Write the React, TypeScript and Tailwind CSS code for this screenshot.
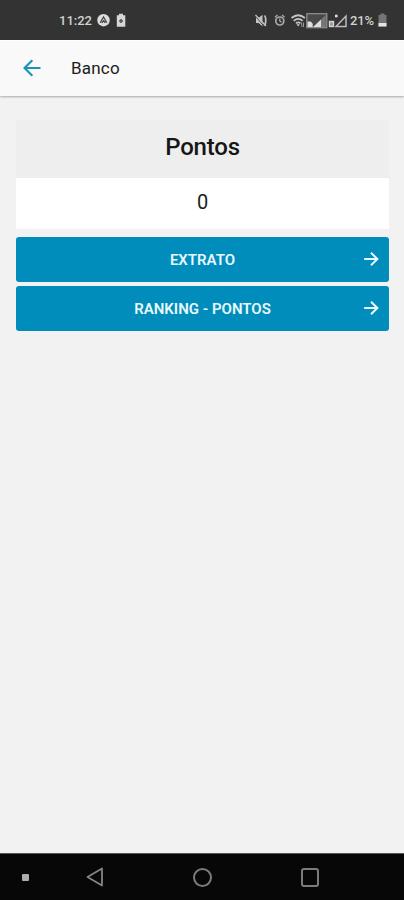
import React from "react";

function StatusBar() {
  return (
    <div className="flex h-10 shrink-0 items-start bg-[#333333] pl-[59px] pt-[13px] text-[#d2d2d2]">
      <span className="w-[38px] whitespace-nowrap text-[13px] font-medium leading-[15px]">11:22</span>
      <svg width="13" height="14" viewBox="0 0 13 14" className="shrink-0">
        <circle cx="6.5" cy="7.2" r="6.2" fill="#dcdcdc" />
        <path d="M3.2 9.8 6.5 4l3.3 5.8M4.8 9.8 6.5 7.8l1.8 2" fill="none" stroke="#444" strokeWidth="1.3" />
      </svg>
      <svg width="10" height="15" viewBox="0 0 10 15" className="ml-[6px] shrink-0">
        <path d="M3 .8h4v1.4h2.3v11.6H.8V2.2H3z" fill="#d6d6d6" />
        <path d="M5 6v4M3 8h4" stroke="#555" strokeWidth="1.6" />
      </svg>
      <svg width="95" height="16" viewBox="255 13 95 16" className="ml-[129px] shrink-0">
        <path d="M256 18h2.5l4-3.2v11.4l-4-3.2H256z" fill="#c4c4c4" />
        <path d="M264.7 15.5q2.2 4.5 0 10" fill="none" stroke="#c2c2c2" strokeWidth="1.7" />
        <path d="M255.5 16.3 264 26.2" stroke="#444" strokeWidth="1" />
        <path d="m255.5 15 10.5 11" stroke="#c2c2c2" strokeWidth="1.3" />
        <circle cx="279.8" cy="21" r="4" fill="none" stroke="#aaa" strokeWidth="1.7" />
        <path d="m275 17.2 2.5-2.2m7 2.2L282 15M279.8 18.5V21l1.8 1.2" fill="none" stroke="#aaa" strokeWidth="1.3" />
        <path d="M291.5 18q6.7-5.5 13.4 0M293.7 20.8q4.5-3.8 9 0M296 23.4q2.2-2 4.4 0" fill="none" stroke="#c4c4c4" strokeWidth="1.7" />
        <path d="m296.5 24.3 1.7 2.2 1.7-2.2z" fill="#ccc" />
        <path d="m301.5 22.5.5 4.5m1.5-4.5v4.5" stroke="#999" strokeWidth="1" />
        <rect x="306.8" y="13.7" width="20" height="14" fill="#494949" stroke="#8c8c8c" strokeWidth="1.3" />
        <path d="M313 27 321 19.5V27zM307.5 21.5h3.2l2 2.2V27h-5.2z" fill="#dedede" />
        <path d="m321 19.5 4.8-4.5v12H321z" fill="#777" />
        <rect x="329.5" y="21.5" width="4" height="5" fill="#999" stroke="#d4d4d4" strokeWidth="1.4" />
        <rect x="335" y="14.7" width="2.6" height="2.6" fill="#ddd" />
        <path d="M336 26.5 346 16v10.5z" fill="none" stroke="#bdbdbd" strokeWidth="1.5" />
      </svg>
      <span className="w-[29px] whitespace-nowrap text-[13px] font-medium leading-[15px] tracking-[-0.1px]">21%</span>
      <svg width="9" height="15" viewBox="0 0 9 15" className="-ml-px shrink-0">
        <path d="M2.5 .5h4V2h2v11.5H.5V2h2z" fill="#747474" />
        <path d="M.5 10h8v3.5h-8z" fill="#e3e3e3" />
      </svg>
    </div>
  );
}

function Arrow({ left = false }: { left?: boolean }) {
  return left ? (
    <svg width="18" height="18" viewBox="0 0 18 18" className="mb-px shrink-0">
      <path d="M17.5 9H2M9.3 1.2 1.5 9l7.8 7.8" fill="none" stroke="#1b94b8" strokeWidth="2.2" />
    </svg>
  ) : (
    <svg width="15" height="14" viewBox="0 0 15 14" className="absolute right-[10px] top-[15px]">
      <path d="M.2 7h13M7 .8 13.4 7 7 13.2" fill="none" stroke="#e9faff" strokeWidth="2" />
    </svg>
  );
}

function ActionButton({ label }: { label: string }) {
  return (
    <button className="relative flex h-[45px] w-full items-center justify-center rounded-[3px] bg-[#008dbb] text-[15px] font-semibold leading-5 text-[#e9f8fd]">
      {label}
      <Arrow />
    </button>
  );
}

export default function App() {
  return (
    <div className="flex h-[900px] w-[404px] flex-col overflow-hidden bg-[#f2f2f2] font-[Roboto,sans-serif]">
      <StatusBar />
      <header className="z-10 flex h-14 shrink-0 items-center border-t border-white bg-[#f9f9f9] pl-[23px] shadow-[0_1px_2px_rgba(0,0,0,0.3)]">
        <Arrow left />
        <h1 className="ml-[30px] text-[17px] font-normal tracking-[0.2px] text-[#202020]">Banco</h1>
      </header>
      <main className="flex-1 pl-4 pr-[15px] pt-6">
        <section className="text-center">
          <h2 className="h-[58px] bg-[#eeeeee] pt-[12px] text-[24px] font-medium leading-[30px] tracking-[-0.2px] text-[#161616]">Pontos</h2>
          <div className="h-[51px] bg-white pt-[12px] text-[20px] leading-6 text-[#1c1c1c]">0</div>
        </section>
        <div className="mt-[8.4px] flex flex-col gap-1">
          <ActionButton label="EXTRATO" />
          <ActionButton label="RANKING - PONTOS" />
        </div>
      </main>
      <nav className="flex h-[47px] shrink-0 items-center border-t border-[#555] bg-[#070707] pl-[22px]">
        <span className="h-[7px] w-[7px] rounded-[1px] bg-[#adadad]" />
        <svg width="18" height="20" viewBox="0 0 18 20" className="ml-[57px]">
          <path d="M16 1.5v17L1.5 10z" fill="none" stroke="#858585" strokeWidth="1.8" strokeLinejoin="round" />
        </svg>
        <span className="ml-[89px] h-[19px] w-[19px] rounded-full border-2 border-[#7c7c7c]" />
        <span className="ml-[89px] h-[19px] w-[18px] rounded-[3px] border-2 border-[#7c7c7c]" />
      </nav>
    </div>
  );
}
